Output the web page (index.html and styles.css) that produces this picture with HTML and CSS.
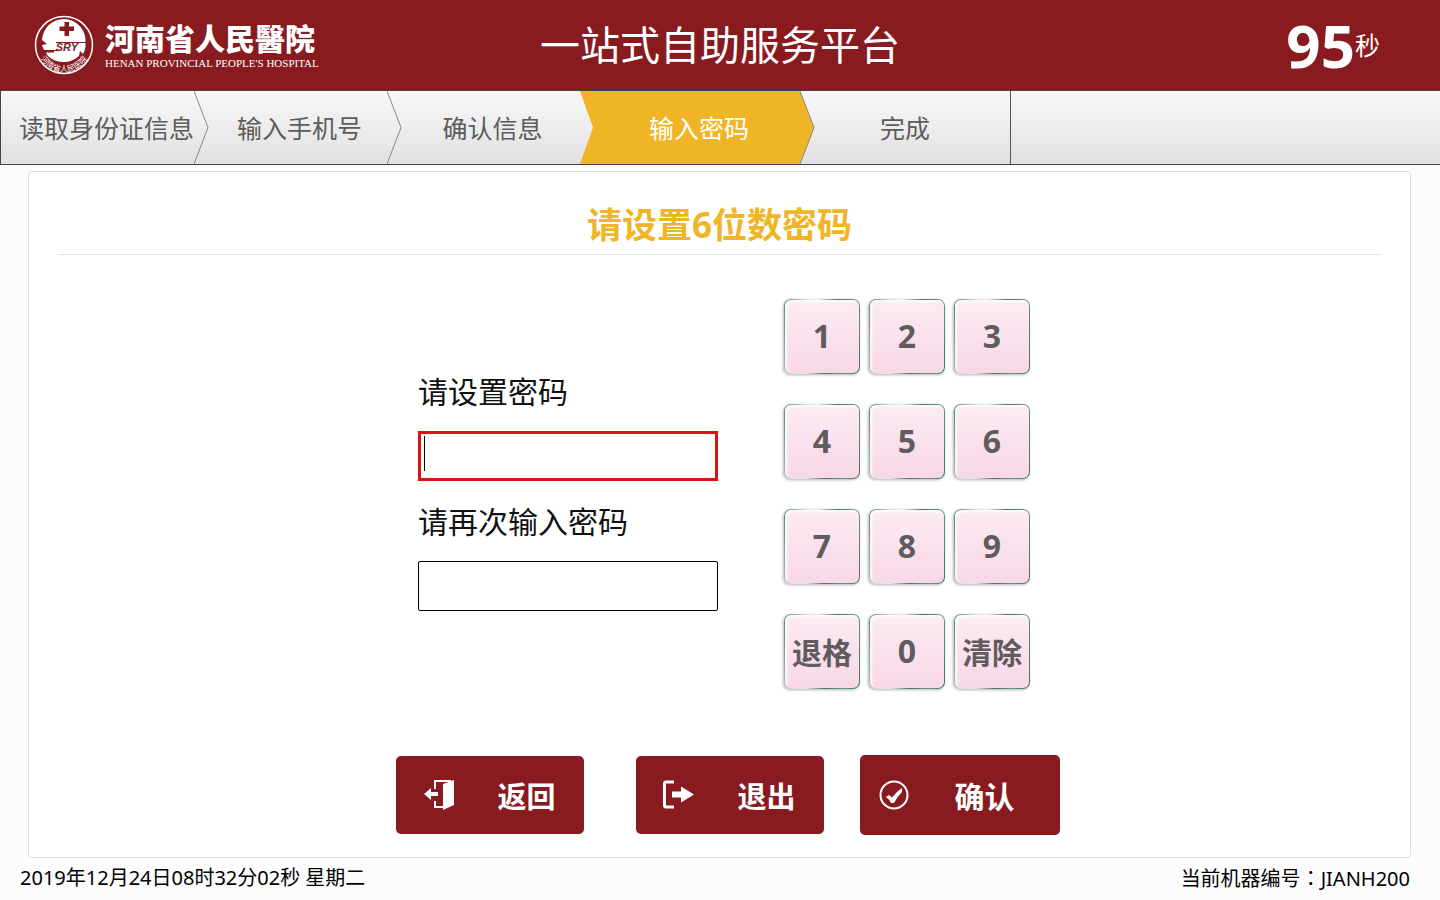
FILE: index.html
```html
<!DOCTYPE html>
<html lang="zh-CN">
<head>
    <meta charset="UTF-8">
    <meta name="viewport" content="width=device-width, initial-scale=1.0">
    <title>一站式自助服务平台</title>
    <link rel="stylesheet" href="styles.css">
</head>
<body>
    <header class="header">
        <div class="brand">
            <svg class="brand-logo" viewBox="0 0 60 60" aria-hidden="true">
                <defs>
                    <path id="ringText" d="M3 30 A27 27 0 0 0 57 30"/>
                </defs>
                <circle cx="30" cy="30" r="28.500" fill="none" stroke="#fff" stroke-width="1.500"/>
                <path d="M30 4 A22 22 0 0 1 51.500 28 Q52 34 49 39 L46 36 L45 41 Q38 47 30 47 Q20 47 14 41 L12 37.500 H20 V36 H11 L9 33 L8 30 L13 29 L8 25 A22 22 0 0 1 30 4Z" fill="#fff"/>
                <path d="M30.500 7h4.500v4.500h5v4.500h-5v5h-4.500v-5h-5v-4.500h5z" fill="#871b1f"/>
                <path d="M9 35.500H24M22 27.500H52" fill="none" stroke="#871b1f" stroke-width="1.200"/>
                <text class="logo-text" x="33" y="36" text-anchor="middle">SRY</text>
                <text class="ring-text"><textPath href="#ringText" startOffset="50%" text-anchor="middle">河南省人民医院</textPath></text>
            </svg>
            <div class="brand-text">
                <div class="brand-cn">河南省人民醫院</div>
                <div class="brand-en">HENAN PROVINCIAL PEOPLE'S HOSPITAL</div>
            </div>
        </div>
        <h1 class="header-title">一站式自助服务平台</h1>
        <div class="countdown"><strong>95</strong><span>秒</span></div>
    </header>

    <!-- 步骤条 -->
    <svg class="defs" aria-hidden="true">
        <linearGradient id="barFill" x1="0" y1="0" x2="0" y2="1">
            <stop offset="0" stop-color="#f8f8f8"/>
            <stop offset="1" stop-color="#e1e1e1"/>
        </linearGradient>
    </svg>
    <ol class="steps">
        <li class="step">读取身份证信息
            <svg class="chevron" viewBox="0 0 16 73"><path class="chevron-fill" d="M0 0L14 36.500L0 73z"/><path class="chevron-line" d="M0 0L14 36.500L0 73"/></svg>
        </li>
        <li class="step">输入手机号
            <svg class="chevron" viewBox="0 0 16 73"><path class="chevron-fill" d="M0 0L14 36.500L0 73z"/><path class="chevron-line" d="M0 0L14 36.500L0 73"/></svg>
        </li>
        <li class="step">确认信息
            <svg class="chevron" viewBox="0 0 16 73"><path class="chevron-fill" d="M0 0L13 36.500L0 73z"/></svg>
        </li>
        <li class="step step-active" aria-current="step">输入密码
            <svg class="chevron" viewBox="0 0 16 73"><path class="chevron-gold" d="M0 0L14 36.500L0 73z"/><path class="chevron-line" d="M0 0L14 36.500L0 73"/></svg>
        </li>
        <li class="step step-last">完成</li>
    </ol>

    <main class="panel">
        <h2 class="panel-title">请设置6位数密码</h2>

        <form id="passwordForm">
            <div class="entry">
                <div class="fields">
                    <label for="password">请设置密码</label>
                    <input type="password" id="password" class="field field-active" maxlength="6">
                    <label for="confirmPassword">请再次输入密码</label>
                    <input type="password" id="confirmPassword" class="field" maxlength="6">
                </div>

                <!-- 数字键盘 -->
                <div class="keypad">
                    <button type="button" class="key">1</button>
                    <button type="button" class="key">2</button>
                    <button type="button" class="key">3</button>
                    <button type="button" class="key">4</button>
                    <button type="button" class="key">5</button>
                    <button type="button" class="key">6</button>
                    <button type="button" class="key">7</button>
                    <button type="button" class="key">8</button>
                    <button type="button" class="key">9</button>
                    <button type="button" class="key key-text">退格</button>
                    <button type="button" class="key">0</button>
                    <button type="button" class="key key-text">清除</button>
                </div>
            </div>

            <div class="actions">
                <button type="button" class="btn">
                    <svg viewBox="0 0 32 32" aria-hidden="true">
                        <path d="M12 10V2H28M12 22V28H21" fill="none" stroke="#fff" stroke-width="2"/>
                        <path d="M20 5L31 1V26L20 31zM1 15L8 9V13H15V17H8V21z" fill="#fff"/>
                    </svg>
                    <span>返回</span>
                </button>
                <button type="button" class="btn">
                    <svg viewBox="0 0 32 32" aria-hidden="true">
                        <path d="M11 3H3Q1.500 3 1.500 4.500V26.500Q1.500 28 3 28H11" fill="none" stroke="#fff" stroke-width="3"/>
                        <path d="M9 12.500H18V7.500L31 15.500L18 23.500V18.500H9z" fill="#fff"/>
                    </svg>
                    <span>退出</span>
                </button>
                <button type="submit" class="btn btn-confirm">
                    <svg viewBox="0 0 32 32" aria-hidden="true">
                        <circle cx="16" cy="16" r="13.500" fill="none" stroke="#fff" stroke-width="2"/>
                        <path d="M8 18L11 16L14 18.500Q18 13 24 9L24 13Q19 18 16 24H13Q11 20 8 18Z" fill="#fff"/>
                    </svg>
                    <span>确认</span>
                </button>
            </div>
        </form>
    </main>

    <footer class="footer">
        <span>2019年12月24日08时32分02秒 星期二</span>
        <span>当前机器编号<span lang="zh-TW" class="colon">：</span>JIANH200</span>
    </footer>
</body>
</html>
```
FILE: styles.css
```css
/* General */
* {
    box-sizing: border-box;
}

body {
    display: flex;
    flex-direction: column;
    min-height: 100vh;
    margin: 0;
    background-color: #fcfcfc;
    color: #111;
    font-family: "Noto Sans", "Noto Sans CJK SC", sans-serif;
}

button,
input {
    font-family: inherit;
}

/* Cabecera */
.header {
    display: grid;
    grid-template-columns: 1fr auto 1fr;
    align-items: center;
    height: 90px;
    padding: 0 34px;
    background-color: #871b1f;
    color: white;
}

.brand {
    display: flex;
    align-items: center;
    gap: 11px;
}

.brand-logo {
    width: 60px;
    height: 60px;
}

.logo-text {
    fill: #871b1f;
    font-family: "Liberation Sans", sans-serif;
    font-size: 11px;
    font-style: italic;
    font-weight: bold;
}

.ring-text {
    fill: white;
    font-size: 8px;
}

.brand-cn {
    font-size: 30px;
    font-weight: 900;
    line-height: 36px;
}

.brand-en {
    font-family: "Liberation Serif", serif;
    font-size: 11px;
    line-height: 12px;
    white-space: nowrap;
}

.header-title {
    margin: 0;
    font-size: 40px;
    font-weight: 400;
    line-height: 60px;
}

.countdown {
    display: flex;
    align-items: center;
    justify-content: flex-end;
    padding-right: 26px;
}

.countdown strong {
    font-size: 60px;
    line-height: 80px;
}

.countdown span {
    font-size: 25px;
    line-height: 36px;
}

/* Pasos */
.defs {
    position: absolute;
    width: 0;
    height: 0;
}

.steps {
    display: flex;
    height: 75px;
    margin: 0;
    padding: 0;
    border: 1px solid #444;
    border-right: 0;
    background: linear-gradient(#f8f8f8, #e1e1e1);
    list-style: none;
}

.step {
    position: relative;
    flex: 0 0 193px;
    padding-left: 18px;
    color: #5c5c5c;
    font-size: 25px;
    line-height: 74px;
    text-align: center;
    white-space: nowrap;
}

.step-active {
    flex-basis: 220px;
    background-color: #efb526;
    color: white;
}

.step-last {
    flex-basis: 211px;
    padding-left: 0;
    border-right: 1px solid #555;
}

.chevron {
    position: absolute;
    top: 0;
    left: 100%;
    z-index: 1;
    width: 16px;
    height: 73px;
}

.chevron-fill {
    fill: url(#barFill);
}

.chevron-gold {
    fill: #efb526;
}

.chevron-line {
    fill: none;
    stroke: #888;
    stroke-width: 1;
}

/* Panel */
.panel {
    flex: 1;
    margin: 6px 29px 0 28px;
    padding: 30px 29px 22px;
    border: 1px solid #ddd;
    border-radius: 4px;
    background-color: white;
}

.panel-title {
    margin: 0;
    padding-bottom: 6px;
    border-bottom: 1px solid #e2e2e2;
    color: #efb526;
    font-size: 35px;
    line-height: 46px;
    text-align: center;
}

.entry {
    display: flex;
    justify-content: center;
    gap: 66px;
    padding: 44px 0 0 9px;
}

.fields {
    display: flex;
    flex-direction: column;
    width: 300px;
    padding-top: 68px;
}

.fields label {
    height: 64px;
    font-size: 30px;
    line-height: 50px;
}

.field {
    width: 100%;
    height: 50px;
    margin-bottom: 16px;
    padding: 0 4px;
    border: 1px solid #000;
    border-radius: 2px;
    background-color: white;
    font-size: 30px;
}

.field-active {
    border: 3px solid #d81414;
    border-radius: 0;
    background: linear-gradient(#000, #000) 3px 2px / 1px 35px no-repeat white;
}

/* Teclado */
.keypad {
    display: grid;
    grid-template-columns: repeat(3, 76px);
    gap: 30px 9px;
}

.key {
    height: 75px;
    padding: 0 0 2px;
    border: 1px solid transparent;
    border-radius: 7px;
    background:
        linear-gradient(#fcebf3, #f8d7e6) padding-box,
        linear-gradient(100deg, #4d8770, #d8e4df 25%, #e8eeeb 38%, #4e6e61 60%, #64a085 80%, #45705f) border-box;
    box-shadow: -1px 1px 3px rgba(0, 0, 0, 0.3), inset 2px 2px 3px rgba(255, 255, 255, 0.8);
    color: #605b5f;
    font-size: 32px;
    font-weight: bold;
    cursor: pointer;
}

.key-text {
    font-size: 30px;
}

/* Botones */
.actions {
    display: flex;
    align-items: center;
    justify-content: center;
    gap: 52px;
    padding: 66px 0 0 16px;
}

.btn {
    display: flex;
    align-items: center;
    justify-content: space-between;
    width: 188px;
    height: 78px;
    padding: 0 28px 0 27px;
    border: 0;
    border-radius: 5px;
    background-color: #871b1f;
    color: white;
    font-size: 29px;
    font-weight: bold;
    cursor: pointer;
}

.btn svg {
    width: 32px;
    height: 32px;
}

.btn-confirm {
    width: 200px;
    height: 80px;
    margin-left: -16px;
    padding: 0 45px 0 18px;
    font-size: 30px;
}

/* Pie */
.footer {
    display: flex;
    justify-content: space-between;
    padding: 0 30px 2px 20px;
    color: #000;
    font-size: 20px;
    line-height: 40px;
}

.colon {
    font-family: "Noto Sans CJK TC", sans-serif;
}
```
